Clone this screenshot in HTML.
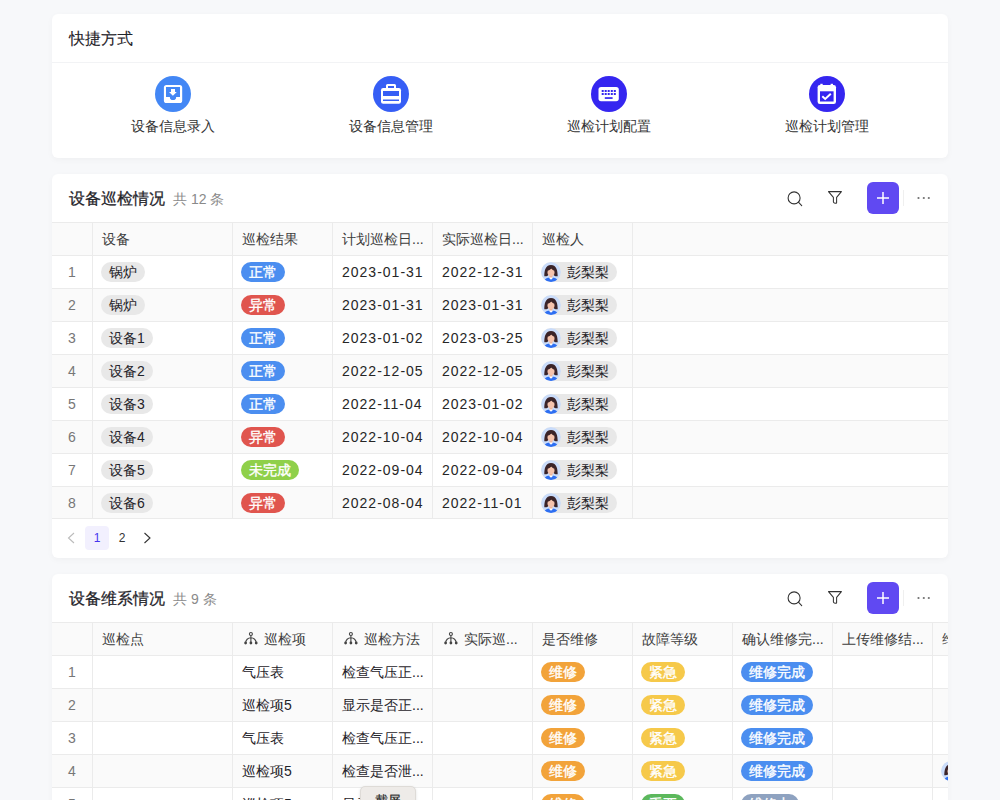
<!DOCTYPE html>
<html><head><meta charset="utf-8">
<style>
*{box-sizing:border-box;margin:0;padding:0}
html,body{width:1000px;height:800px;overflow:hidden;background:#f7f8fa;font-family:"Liberation Sans",sans-serif;color:#1f2329}
.card{position:absolute;left:52px;width:896px;background:#fff;border-radius:6px;box-shadow:0 2px 6px rgba(0,0,0,0.035);overflow:hidden}
.title{position:absolute;left:17px;font-size:16px;font-weight:500;-webkit-text-stroke:0.25px #1f2329;color:#1f2329;line-height:22px;white-space:nowrap}
.title .cnt{font-size:14px;font-weight:400;color:#8a8a8a;-webkit-text-stroke:0;margin-left:8px}
.hline{position:absolute;left:0;right:0;height:1px;background:#ebebeb}
.qi{position:absolute;width:218px;height:82px;text-align:center}
.qi .ic{position:absolute;left:91px;top:14px;width:36px;height:36px;border-radius:50%}
.qi .ic svg{position:absolute;left:0;top:0}
.qi .lb{position:absolute;left:0;right:0;top:54px;font-size:14px;line-height:20px;color:#333}
.tbl{position:absolute;left:0;top:49px;width:896px}
.row{position:absolute;left:0;width:896px;height:33px;border-bottom:1px solid #ebebeb}
.row.hd{background:#fafafa}
.row.cut{height:32px}.row.cut .c{height:31px}
.row.alt{background:#fafafa}
.c{position:absolute;top:0;height:32px;line-height:32px;font-size:14px;padding-left:9px;white-space:nowrap;overflow:hidden}
.c.bl{border-left:1px solid #ebebeb}
.hd .c{color:#3d3d3d}
.idx{color:#777;text-align:center;padding-left:0}
.num{letter-spacing:1px;color:#262626}
.tag{display:inline-block;height:20px;line-height:20px;border-radius:10px;padding:0 8px;font-size:14px;vertical-align:middle;position:relative;top:-1px;left:-1px;letter-spacing:0}
.g{background:#e8e8e8;color:#1f2329}
.w{color:#fff;font-weight:500;-webkit-text-stroke:0.35px #fff}
.pc{display:inline-block;height:20px;line-height:20px;border-radius:10px;background:#e8e8e8;padding:0 8px 0 26px;position:relative;vertical-align:middle;top:-1px;left:-1px}
.av{position:absolute;left:0;top:0;width:20px;height:20px;border-radius:50%;overflow:hidden}
.av svg{display:block}
.tr{vertical-align:middle;position:relative;top:-2px;margin-right:4px}
.tb{position:absolute}
.plus{position:absolute;left:815px;top:8px;width:32px;height:32px;border-radius:6px;background:#6049f2}
.sep{position:absolute;left:851px;top:16px;width:1px;height:16px;background:#efefef}
.pg{position:absolute;font-size:12px;line-height:25px;text-align:center}
.pg.on{background:#f2f0fe;color:#4634ee;border-radius:4px;width:24px;height:24px}
.tip{position:absolute;left:360px;top:786px;width:56px;height:24px;background:#eeebe8;border:1px solid #dedbd7;border-radius:5px;font-size:13px;line-height:27px;text-align:center;color:#222;-webkit-text-stroke:0.2px #222;box-shadow:0 1px 3px rgba(0,0,0,0.12)}

</style></head><body>

<div class="card" style="top:14px;height:144px">
  <div class="title" style="top:14px;-webkit-text-stroke:0.1px #1f2329">快捷方式</div>
  <div class="hline" style="top:48px;background:#f2f3f5"></div>
  <div class="qi" style="left:12px;top:48px">
    <div class="ic" style="background:#4387f5"><svg width="36" height="36" viewBox="0 0 36 36"><rect x="8.9" y="9" width="18.3" height="18" rx="2.6" fill="#fff"/><path d="M11 11.1h14v9.8h-3.85a3.15 3.15 0 0 1-6.3 0H11z" fill="#4387f5"/><path d="M16 12.9h4v3h1.8l-3.9 3.9-3.9-3.9h2z" fill="#fff"/></svg></div>
    <div class="lb">设备信息录入</div>
  </div>
  <div class="qi" style="left:230px;top:48px">
    <div class="ic" style="background:#365ef5"><svg width="36" height="36" viewBox="0 0 36 36"><rect x="13" y="8" width="10" height="6" rx="1.5" fill="#fff"/><rect x="15" y="10" width="6" height="3" fill="#365ef5"/><rect x="8" y="12" width="20" height="15.8" rx="2.2" fill="#fff"/><rect x="10" y="15" width="16" height="5" fill="#365ef5"/><rect x="10" y="23.5" width="16" height="1.5" fill="#365ef5"/></svg></div>
    <div class="lb">设备信息管理</div>
  </div>
  <div class="qi" style="left:448px;top:48px">
    <div class="ic" style="background:#3526f0"><svg width="36" height="36" viewBox="0 0 36 36"><rect x="7.5" y="11" width="20.3" height="14.2" rx="2.6" fill="#fff"/><g fill="#3526f0"><rect x="10.7" y="14" width="2" height="2"/><rect x="13.7" y="14" width="2" height="2"/><rect x="16.7" y="14" width="2" height="2"/><rect x="19.8" y="14" width="2" height="2"/><rect x="22.8" y="14" width="2" height="2"/><rect x="10.7" y="17" width="2" height="2"/><rect x="13.7" y="17" width="2" height="2"/><rect x="16.7" y="17" width="2" height="2"/><rect x="19.8" y="17" width="2" height="2"/><rect x="22.8" y="17" width="2" height="2"/><rect x="13.8" y="21.2" width="7.8" height="1.7"/></g></svg></div>
    <div class="lb">巡检计划配置</div>
  </div>
  <div class="qi" style="left:666px;top:48px">
    <div class="ic" style="background:#3526f0"><svg width="36" height="36" viewBox="0 0 36 36"><rect x="8.6" y="9" width="18.4" height="19" rx="2.3" fill="#fff"/><rect x="11.3" y="7.8" width="2.4" height="2.5" fill="#fff"/><rect x="21.6" y="7.8" width="2.4" height="2.5" fill="#fff"/><rect x="11" y="15.3" width="13.6" height="10.2" fill="#3526f0"/><path d="M13.3 20.3l2.9 2.7 5.6-5.2" fill="none" stroke="#fff" stroke-width="2"/></svg></div>
    <div class="lb">巡检计划管理</div>
  </div>
</div>

<div class="card" style="top:174px;height:384px">
  <div class="title" style="top:14px">设备巡检情况<span class="cnt">共 12 条</span></div>
  <svg class="tb" style="left:733px;top:15px" width="18" height="18" viewBox="0 0 18 18"><circle cx="9.1" cy="8.9" r="6" fill="none" stroke="#333" stroke-width="1.1"/><path d="M13.4 13.2l3.3 3.4" stroke="#333" stroke-width="1.1" stroke-linecap="round"/></svg>
  <svg class="tb" style="left:775px;top:16px" width="16" height="16" viewBox="0 0 16 16"><path d="M1.5 1.6H14.4L9.6 7.4V12.4Q9.6 13.4 8.7 13.2L7.3 12.9Q6.4 12.7 6.4 11.8V7.4Z" fill="none" stroke="#333" stroke-width="1.05" stroke-linejoin="round"/></svg>
  <div class="plus"><svg width="32" height="32" viewBox="0 0 32 32"><path d="M16 10v12M10 16h12" stroke="#fff" stroke-width="1.5"/></svg></div>
  <div class="sep"></div>
  <svg class="tb" style="left:864px;top:22px" width="16" height="4" viewBox="0 0 16 4"><circle cx="2.5" cy="2" r="1.1" fill="#707070"/><circle cx="7.8" cy="2" r="1.1" fill="#707070"/><circle cx="12.8" cy="2" r="1.1" fill="#707070"/></svg>
  <div class="hline" style="top:48px"></div>
  <div class="tbl">
<div class="row hd" style="top:0"><div class="c" style="left:0px;width:40px"></div><div class="c bl" style="left:40px;width:140px">设备</div><div class="c bl" style="left:180px;width:100px">巡检结果</div><div class="c bl" style="left:280px;width:100px">计划巡检日...</div><div class="c bl" style="left:380px;width:100px">实际巡检日...</div><div class="c bl" style="left:480px;width:100px">巡检人</div><div class="c last bl" style="left:580px;width:316px"></div></div>
<div class="row" style="top:33px"><div class="c idx" style="left:0px;width:40px">1</div><div class="c bl" style="left:40px;width:140px"><span class="tag g">锅炉</span></div><div class="c bl" style="left:180px;width:100px"><span class="tag w" style="background:#4b8ef0">正常</span></div><div class="c num bl" style="left:280px;width:100px">2023-01-31</div><div class="c num bl" style="left:380px;width:100px">2022-12-31</div><div class="c bl" style="left:480px;width:100px"><span class="pc"><span class="av"><svg width="20" height="20" viewBox="0 0 20 20"><circle cx="10" cy="10" r="10" fill="#cadcfa"/><path d="M2.8 20C3.2 16.6 6 15.4 10 15.4S16.8 16.6 17.2 20z" fill="#2e6ff2"/><rect x="8.6" y="12.6" width="2.8" height="3.4" fill="#eeb59c"/><path d="M7.6 15.5L10 17.8 12.4 15.5z" fill="#fff"/><path d="M3.3 14.2C3.4 9 4.2 3.3 10 3.1 15.8 3.3 16.6 9 16.7 14.2 15 14.6 13.4 14.1 12.6 13.1H7.4C6.6 14.1 5 14.6 3.3 14.2z" fill="#3b2429"/><ellipse cx="10" cy="10.2" rx="3.5" ry="3.9" fill="#f5c3ad"/><path d="M6.1 8.8C6.4 5.8 8 4.7 10 4.7S13.6 5.8 13.9 8.8C12.4 8.4 11 7.4 10.3 6.4 9.4 7.6 7.8 8.5 6.1 8.8z" fill="#3b2429"/></svg></span>彭梨梨</span></div><div class="c last bl" style="left:580px;width:316px"></div></div>
<div class="row alt" style="top:66px"><div class="c idx" style="left:0px;width:40px">2</div><div class="c bl" style="left:40px;width:140px"><span class="tag g">锅炉</span></div><div class="c bl" style="left:180px;width:100px"><span class="tag w" style="background:#e0554e">异常</span></div><div class="c num bl" style="left:280px;width:100px">2023-01-31</div><div class="c num bl" style="left:380px;width:100px">2023-01-31</div><div class="c bl" style="left:480px;width:100px"><span class="pc"><span class="av"><svg width="20" height="20" viewBox="0 0 20 20"><circle cx="10" cy="10" r="10" fill="#cadcfa"/><path d="M2.8 20C3.2 16.6 6 15.4 10 15.4S16.8 16.6 17.2 20z" fill="#2e6ff2"/><rect x="8.6" y="12.6" width="2.8" height="3.4" fill="#eeb59c"/><path d="M7.6 15.5L10 17.8 12.4 15.5z" fill="#fff"/><path d="M3.3 14.2C3.4 9 4.2 3.3 10 3.1 15.8 3.3 16.6 9 16.7 14.2 15 14.6 13.4 14.1 12.6 13.1H7.4C6.6 14.1 5 14.6 3.3 14.2z" fill="#3b2429"/><ellipse cx="10" cy="10.2" rx="3.5" ry="3.9" fill="#f5c3ad"/><path d="M6.1 8.8C6.4 5.8 8 4.7 10 4.7S13.6 5.8 13.9 8.8C12.4 8.4 11 7.4 10.3 6.4 9.4 7.6 7.8 8.5 6.1 8.8z" fill="#3b2429"/></svg></span>彭梨梨</span></div><div class="c last bl" style="left:580px;width:316px"></div></div>
<div class="row" style="top:99px"><div class="c idx" style="left:0px;width:40px">3</div><div class="c bl" style="left:40px;width:140px"><span class="tag g">设备1</span></div><div class="c bl" style="left:180px;width:100px"><span class="tag w" style="background:#4b8ef0">正常</span></div><div class="c num bl" style="left:280px;width:100px">2023-01-02</div><div class="c num bl" style="left:380px;width:100px">2023-03-25</div><div class="c bl" style="left:480px;width:100px"><span class="pc"><span class="av"><svg width="20" height="20" viewBox="0 0 20 20"><circle cx="10" cy="10" r="10" fill="#cadcfa"/><path d="M2.8 20C3.2 16.6 6 15.4 10 15.4S16.8 16.6 17.2 20z" fill="#2e6ff2"/><rect x="8.6" y="12.6" width="2.8" height="3.4" fill="#eeb59c"/><path d="M7.6 15.5L10 17.8 12.4 15.5z" fill="#fff"/><path d="M3.3 14.2C3.4 9 4.2 3.3 10 3.1 15.8 3.3 16.6 9 16.7 14.2 15 14.6 13.4 14.1 12.6 13.1H7.4C6.6 14.1 5 14.6 3.3 14.2z" fill="#3b2429"/><ellipse cx="10" cy="10.2" rx="3.5" ry="3.9" fill="#f5c3ad"/><path d="M6.1 8.8C6.4 5.8 8 4.7 10 4.7S13.6 5.8 13.9 8.8C12.4 8.4 11 7.4 10.3 6.4 9.4 7.6 7.8 8.5 6.1 8.8z" fill="#3b2429"/></svg></span>彭梨梨</span></div><div class="c last bl" style="left:580px;width:316px"></div></div>
<div class="row alt" style="top:132px"><div class="c idx" style="left:0px;width:40px">4</div><div class="c bl" style="left:40px;width:140px"><span class="tag g">设备2</span></div><div class="c bl" style="left:180px;width:100px"><span class="tag w" style="background:#4b8ef0">正常</span></div><div class="c num bl" style="left:280px;width:100px">2022-12-05</div><div class="c num bl" style="left:380px;width:100px">2022-12-05</div><div class="c bl" style="left:480px;width:100px"><span class="pc"><span class="av"><svg width="20" height="20" viewBox="0 0 20 20"><circle cx="10" cy="10" r="10" fill="#cadcfa"/><path d="M2.8 20C3.2 16.6 6 15.4 10 15.4S16.8 16.6 17.2 20z" fill="#2e6ff2"/><rect x="8.6" y="12.6" width="2.8" height="3.4" fill="#eeb59c"/><path d="M7.6 15.5L10 17.8 12.4 15.5z" fill="#fff"/><path d="M3.3 14.2C3.4 9 4.2 3.3 10 3.1 15.8 3.3 16.6 9 16.7 14.2 15 14.6 13.4 14.1 12.6 13.1H7.4C6.6 14.1 5 14.6 3.3 14.2z" fill="#3b2429"/><ellipse cx="10" cy="10.2" rx="3.5" ry="3.9" fill="#f5c3ad"/><path d="M6.1 8.8C6.4 5.8 8 4.7 10 4.7S13.6 5.8 13.9 8.8C12.4 8.4 11 7.4 10.3 6.4 9.4 7.6 7.8 8.5 6.1 8.8z" fill="#3b2429"/></svg></span>彭梨梨</span></div><div class="c last bl" style="left:580px;width:316px"></div></div>
<div class="row" style="top:165px"><div class="c idx" style="left:0px;width:40px">5</div><div class="c bl" style="left:40px;width:140px"><span class="tag g">设备3</span></div><div class="c bl" style="left:180px;width:100px"><span class="tag w" style="background:#4b8ef0">正常</span></div><div class="c num bl" style="left:280px;width:100px">2022-11-04</div><div class="c num bl" style="left:380px;width:100px">2023-01-02</div><div class="c bl" style="left:480px;width:100px"><span class="pc"><span class="av"><svg width="20" height="20" viewBox="0 0 20 20"><circle cx="10" cy="10" r="10" fill="#cadcfa"/><path d="M2.8 20C3.2 16.6 6 15.4 10 15.4S16.8 16.6 17.2 20z" fill="#2e6ff2"/><rect x="8.6" y="12.6" width="2.8" height="3.4" fill="#eeb59c"/><path d="M7.6 15.5L10 17.8 12.4 15.5z" fill="#fff"/><path d="M3.3 14.2C3.4 9 4.2 3.3 10 3.1 15.8 3.3 16.6 9 16.7 14.2 15 14.6 13.4 14.1 12.6 13.1H7.4C6.6 14.1 5 14.6 3.3 14.2z" fill="#3b2429"/><ellipse cx="10" cy="10.2" rx="3.5" ry="3.9" fill="#f5c3ad"/><path d="M6.1 8.8C6.4 5.8 8 4.7 10 4.7S13.6 5.8 13.9 8.8C12.4 8.4 11 7.4 10.3 6.4 9.4 7.6 7.8 8.5 6.1 8.8z" fill="#3b2429"/></svg></span>彭梨梨</span></div><div class="c last bl" style="left:580px;width:316px"></div></div>
<div class="row alt" style="top:198px"><div class="c idx" style="left:0px;width:40px">6</div><div class="c bl" style="left:40px;width:140px"><span class="tag g">设备4</span></div><div class="c bl" style="left:180px;width:100px"><span class="tag w" style="background:#e0554e">异常</span></div><div class="c num bl" style="left:280px;width:100px">2022-10-04</div><div class="c num bl" style="left:380px;width:100px">2022-10-04</div><div class="c bl" style="left:480px;width:100px"><span class="pc"><span class="av"><svg width="20" height="20" viewBox="0 0 20 20"><circle cx="10" cy="10" r="10" fill="#cadcfa"/><path d="M2.8 20C3.2 16.6 6 15.4 10 15.4S16.8 16.6 17.2 20z" fill="#2e6ff2"/><rect x="8.6" y="12.6" width="2.8" height="3.4" fill="#eeb59c"/><path d="M7.6 15.5L10 17.8 12.4 15.5z" fill="#fff"/><path d="M3.3 14.2C3.4 9 4.2 3.3 10 3.1 15.8 3.3 16.6 9 16.7 14.2 15 14.6 13.4 14.1 12.6 13.1H7.4C6.6 14.1 5 14.6 3.3 14.2z" fill="#3b2429"/><ellipse cx="10" cy="10.2" rx="3.5" ry="3.9" fill="#f5c3ad"/><path d="M6.1 8.8C6.4 5.8 8 4.7 10 4.7S13.6 5.8 13.9 8.8C12.4 8.4 11 7.4 10.3 6.4 9.4 7.6 7.8 8.5 6.1 8.8z" fill="#3b2429"/></svg></span>彭梨梨</span></div><div class="c last bl" style="left:580px;width:316px"></div></div>
<div class="row" style="top:231px"><div class="c idx" style="left:0px;width:40px">7</div><div class="c bl" style="left:40px;width:140px"><span class="tag g">设备5</span></div><div class="c bl" style="left:180px;width:100px"><span class="tag w" style="background:#8fd04a">未完成</span></div><div class="c num bl" style="left:280px;width:100px">2022-09-04</div><div class="c num bl" style="left:380px;width:100px">2022-09-04</div><div class="c bl" style="left:480px;width:100px"><span class="pc"><span class="av"><svg width="20" height="20" viewBox="0 0 20 20"><circle cx="10" cy="10" r="10" fill="#cadcfa"/><path d="M2.8 20C3.2 16.6 6 15.4 10 15.4S16.8 16.6 17.2 20z" fill="#2e6ff2"/><rect x="8.6" y="12.6" width="2.8" height="3.4" fill="#eeb59c"/><path d="M7.6 15.5L10 17.8 12.4 15.5z" fill="#fff"/><path d="M3.3 14.2C3.4 9 4.2 3.3 10 3.1 15.8 3.3 16.6 9 16.7 14.2 15 14.6 13.4 14.1 12.6 13.1H7.4C6.6 14.1 5 14.6 3.3 14.2z" fill="#3b2429"/><ellipse cx="10" cy="10.2" rx="3.5" ry="3.9" fill="#f5c3ad"/><path d="M6.1 8.8C6.4 5.8 8 4.7 10 4.7S13.6 5.8 13.9 8.8C12.4 8.4 11 7.4 10.3 6.4 9.4 7.6 7.8 8.5 6.1 8.8z" fill="#3b2429"/></svg></span>彭梨梨</span></div><div class="c last bl" style="left:580px;width:316px"></div></div>
<div class="row alt cut" style="top:264px"><div class="c idx" style="left:0px;width:40px">8</div><div class="c bl" style="left:40px;width:140px"><span class="tag g">设备6</span></div><div class="c bl" style="left:180px;width:100px"><span class="tag w" style="background:#e0554e">异常</span></div><div class="c num bl" style="left:280px;width:100px">2022-08-04</div><div class="c num bl" style="left:380px;width:100px">2022-11-01</div><div class="c bl" style="left:480px;width:100px"><span class="pc"><span class="av"><svg width="20" height="20" viewBox="0 0 20 20"><circle cx="10" cy="10" r="10" fill="#cadcfa"/><path d="M2.8 20C3.2 16.6 6 15.4 10 15.4S16.8 16.6 17.2 20z" fill="#2e6ff2"/><rect x="8.6" y="12.6" width="2.8" height="3.4" fill="#eeb59c"/><path d="M7.6 15.5L10 17.8 12.4 15.5z" fill="#fff"/><path d="M3.3 14.2C3.4 9 4.2 3.3 10 3.1 15.8 3.3 16.6 9 16.7 14.2 15 14.6 13.4 14.1 12.6 13.1H7.4C6.6 14.1 5 14.6 3.3 14.2z" fill="#3b2429"/><ellipse cx="10" cy="10.2" rx="3.5" ry="3.9" fill="#f5c3ad"/><path d="M6.1 8.8C6.4 5.8 8 4.7 10 4.7S13.6 5.8 13.9 8.8C12.4 8.4 11 7.4 10.3 6.4 9.4 7.6 7.8 8.5 6.1 8.8z" fill="#3b2429"/></svg></span>彭梨梨</span></div><div class="c last bl" style="left:580px;width:316px"></div></div>
  </div>
  <svg class="tb" style="left:14px;top:358px" width="10" height="12" viewBox="0 0 10 12"><path d="M8 1L2.5 6 8 11" fill="none" stroke="#bbbbbb" stroke-width="1.1"/></svg>
  <div class="pg on" style="left:33px;top:352px">1</div>
  <div class="pg" style="left:58px;top:352px;width:24px;color:#333">2</div>
  <svg class="tb" style="left:90px;top:358px" width="10" height="12" viewBox="0 0 10 12"><path d="M2.5 1L8 6 2.5 11" fill="none" stroke="#333" stroke-width="1.1"/></svg>
</div>

<div class="card" style="top:574px;height:240px">
  <div class="title" style="top:14px">设备维系情况<span class="cnt">共 9 条</span></div>
  <svg class="tb" style="left:733px;top:15px" width="18" height="18" viewBox="0 0 18 18"><circle cx="9.1" cy="8.9" r="6" fill="none" stroke="#333" stroke-width="1.1"/><path d="M13.4 13.2l3.3 3.4" stroke="#333" stroke-width="1.1" stroke-linecap="round"/></svg>
  <svg class="tb" style="left:775px;top:16px" width="16" height="16" viewBox="0 0 16 16"><path d="M1.5 1.6H14.4L9.6 7.4V12.4Q9.6 13.4 8.7 13.2L7.3 12.9Q6.4 12.7 6.4 11.8V7.4Z" fill="none" stroke="#333" stroke-width="1.05" stroke-linejoin="round"/></svg>
  <div class="plus"><svg width="32" height="32" viewBox="0 0 32 32"><path d="M16 10v12M10 16h12" stroke="#fff" stroke-width="1.5"/></svg></div>
  <div class="sep"></div>
  <svg class="tb" style="left:864px;top:22px" width="16" height="4" viewBox="0 0 16 4"><circle cx="2.5" cy="2" r="1.1" fill="#707070"/><circle cx="7.8" cy="2" r="1.1" fill="#707070"/><circle cx="12.8" cy="2" r="1.1" fill="#707070"/></svg>
  <div class="hline" style="top:48px"></div>
  <div class="tbl">
<div class="row hd" style="top:0"><div class="c" style="left:0px;width:40px"></div><div class="c bl" style="left:40px;width:140px">巡检点</div><div class="c bl" style="left:180px;width:100px"><svg class="tr" width="18" height="16" viewBox="0 0 18 16"><g fill="none" stroke="#444" stroke-width="1.1"><circle cx="8.9" cy="4" r="1.5"/><path d="M8.9 5.5V13M3.6 13A5.3 5.3 0 0 1 14.2 13"/></g><g fill="#444"><circle cx="3.6" cy="13" r="1.4"/><circle cx="8.9" cy="13" r="1.4"/><circle cx="14.2" cy="13" r="1.4"/></g></svg>巡检项</div><div class="c bl" style="left:280px;width:100px"><svg class="tr" width="18" height="16" viewBox="0 0 18 16"><g fill="none" stroke="#444" stroke-width="1.1"><circle cx="8.9" cy="4" r="1.5"/><path d="M8.9 5.5V13M3.6 13A5.3 5.3 0 0 1 14.2 13"/></g><g fill="#444"><circle cx="3.6" cy="13" r="1.4"/><circle cx="8.9" cy="13" r="1.4"/><circle cx="14.2" cy="13" r="1.4"/></g></svg>巡检方法</div><div class="c bl" style="left:380px;width:100px"><svg class="tr" width="18" height="16" viewBox="0 0 18 16"><g fill="none" stroke="#444" stroke-width="1.1"><circle cx="8.9" cy="4" r="1.5"/><path d="M8.9 5.5V13M3.6 13A5.3 5.3 0 0 1 14.2 13"/></g><g fill="#444"><circle cx="3.6" cy="13" r="1.4"/><circle cx="8.9" cy="13" r="1.4"/><circle cx="14.2" cy="13" r="1.4"/></g></svg>实际巡...</div><div class="c bl" style="left:480px;width:100px">是否维修</div><div class="c bl" style="left:580px;width:100px">故障等级</div><div class="c bl" style="left:680px;width:100px">确认维修完...</div><div class="c bl" style="left:780px;width:100px">上传维修结...</div><div class="c bl" style="left:880px;width:100px">维修人</div></div>
<div class="row" style="top:33px"><div class="c idx" style="left:0px;width:40px">1</div><div class="c bl" style="left:40px;width:140px"></div><div class="c bl" style="left:180px;width:100px">气压表</div><div class="c bl" style="left:280px;width:100px">检查气压正...</div><div class="c bl" style="left:380px;width:100px"></div><div class="c bl" style="left:480px;width:100px"><span class="tag w" style="background:#f2a33a">维修</span></div><div class="c bl" style="left:580px;width:100px"><span class="tag w" style="background:#f6c94a">紧急</span></div><div class="c bl" style="left:680px;width:100px"><span class="tag w" style="background:#4b8ef0">维修完成</span></div><div class="c bl" style="left:780px;width:100px"></div><div class="c bl" style="left:880px;width:100px"></div></div>
<div class="row alt" style="top:66px"><div class="c idx" style="left:0px;width:40px">2</div><div class="c bl" style="left:40px;width:140px"></div><div class="c bl" style="left:180px;width:100px">巡检项5</div><div class="c bl" style="left:280px;width:100px">显示是否正...</div><div class="c bl" style="left:380px;width:100px"></div><div class="c bl" style="left:480px;width:100px"><span class="tag w" style="background:#f2a33a">维修</span></div><div class="c bl" style="left:580px;width:100px"><span class="tag w" style="background:#f6c94a">紧急</span></div><div class="c bl" style="left:680px;width:100px"><span class="tag w" style="background:#4b8ef0">维修完成</span></div><div class="c bl" style="left:780px;width:100px"></div><div class="c bl" style="left:880px;width:100px"></div></div>
<div class="row" style="top:99px"><div class="c idx" style="left:0px;width:40px">3</div><div class="c bl" style="left:40px;width:140px"></div><div class="c bl" style="left:180px;width:100px">气压表</div><div class="c bl" style="left:280px;width:100px">检查气压正...</div><div class="c bl" style="left:380px;width:100px"></div><div class="c bl" style="left:480px;width:100px"><span class="tag w" style="background:#f2a33a">维修</span></div><div class="c bl" style="left:580px;width:100px"><span class="tag w" style="background:#f6c94a">紧急</span></div><div class="c bl" style="left:680px;width:100px"><span class="tag w" style="background:#4b8ef0">维修完成</span></div><div class="c bl" style="left:780px;width:100px"></div><div class="c bl" style="left:880px;width:100px"></div></div>
<div class="row alt" style="top:132px"><div class="c idx" style="left:0px;width:40px">4</div><div class="c bl" style="left:40px;width:140px"></div><div class="c bl" style="left:180px;width:100px">巡检项5</div><div class="c bl" style="left:280px;width:100px">检查是否泄...</div><div class="c bl" style="left:380px;width:100px"></div><div class="c bl" style="left:480px;width:100px"><span class="tag w" style="background:#f2a33a">维修</span></div><div class="c bl" style="left:580px;width:100px"><span class="tag w" style="background:#f6c94a">紧急</span></div><div class="c bl" style="left:680px;width:100px"><span class="tag w" style="background:#4b8ef0">维修完成</span></div><div class="c bl" style="left:780px;width:100px"></div><div class="c bl" style="left:880px;width:100px"><span class="pc"><span class="av"><svg width="20" height="20" viewBox="0 0 20 20"><circle cx="10" cy="10" r="10" fill="#cadcfa"/><path d="M2.8 20C3.2 16.6 6 15.4 10 15.4S16.8 16.6 17.2 20z" fill="#2e6ff2"/><rect x="8.6" y="12.6" width="2.8" height="3.4" fill="#eeb59c"/><path d="M7.6 15.5L10 17.8 12.4 15.5z" fill="#fff"/><path d="M3.3 14.2C3.4 9 4.2 3.3 10 3.1 15.8 3.3 16.6 9 16.7 14.2 15 14.6 13.4 14.1 12.6 13.1H7.4C6.6 14.1 5 14.6 3.3 14.2z" fill="#3b2429"/><ellipse cx="10" cy="10.2" rx="3.5" ry="3.9" fill="#f5c3ad"/><path d="M6.1 8.8C6.4 5.8 8 4.7 10 4.7S13.6 5.8 13.9 8.8C12.4 8.4 11 7.4 10.3 6.4 9.4 7.6 7.8 8.5 6.1 8.8z" fill="#3b2429"/></svg></span>彭梨梨</span></div></div>
<div class="row" style="top:165px"><div class="c idx" style="left:0px;width:40px">5</div><div class="c bl" style="left:40px;width:140px"></div><div class="c bl" style="left:180px;width:100px">巡检项5</div><div class="c bl" style="left:280px;width:100px">显示是否正...</div><div class="c bl" style="left:380px;width:100px"></div><div class="c bl" style="left:480px;width:100px"><span class="tag w" style="background:#f2a33a">维修</span></div><div class="c bl" style="left:580px;width:100px"><span class="tag w" style="background:#5cb85c">重要</span></div><div class="c bl" style="left:680px;width:100px"><span class="tag w" style="background:#8ea2c0">维修中</span></div><div class="c bl" style="left:780px;width:100px"></div><div class="c bl" style="left:880px;width:100px"></div></div>
  </div>
</div>

<div class="tip">截屏</div>

</body></html>
